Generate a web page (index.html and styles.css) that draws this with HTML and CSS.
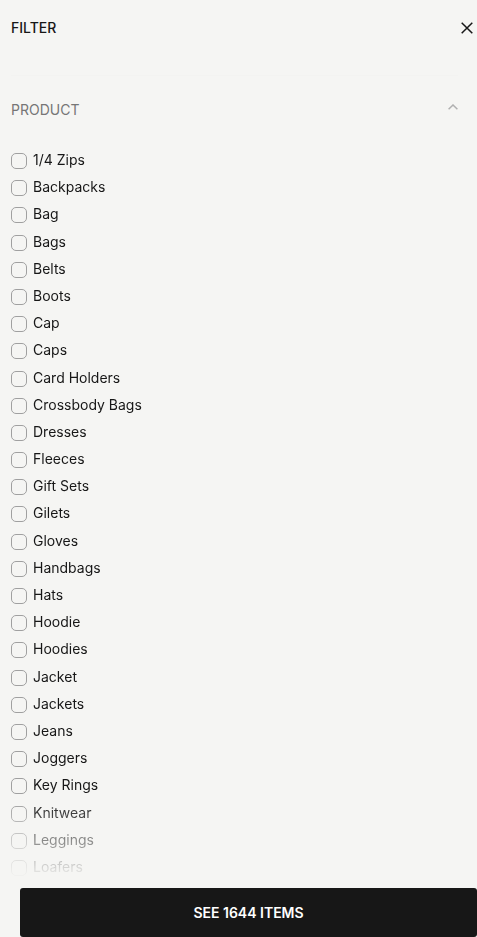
FILE: index.html
```html
<!DOCTYPE html>
<html lang="en">
<head>
    <meta charset="UTF-8">
    <meta name="viewport" content="width=device-width, initial-scale=1">
    <title>Filter</title>
    <link rel="stylesheet" href="styles.css">
</head>
<body>
<form id="filter">
    <header class="filter-head">
        <h2>FILTER</h2>
        <button type="button" class="close" aria-label="Close">
            <svg width="12" height="12" viewBox="0 0 12 12"><path d="M0.7 0.7L11.3 11.3M11.3 0.7L0.7 11.3"/></svg>
        </button>
    </header>
    <section class="group">
        <button type="button" class="group-title" aria-expanded="true">
            <span>PRODUCT</span>
            <svg width="10" height="6" viewBox="0 0 10 6"><path d="M0.6 5.2L5 1L9.4 5.2"/></svg>
        </button>
        <ul class="options">
            <li><label><input type="checkbox" name="product"><span>1/4 Zips</span></label></li>
            <li><label><input type="checkbox" name="product"><span>Backpacks</span></label></li>
            <li><label><input type="checkbox" name="product"><span>Bag</span></label></li>
            <li><label><input type="checkbox" name="product"><span>Bags</span></label></li>
            <li><label><input type="checkbox" name="product"><span>Belts</span></label></li>
            <li><label><input type="checkbox" name="product"><span>Boots</span></label></li>
            <li><label><input type="checkbox" name="product"><span>Cap</span></label></li>
            <li><label><input type="checkbox" name="product"><span>Caps</span></label></li>
            <li><label><input type="checkbox" name="product"><span>Card Holders</span></label></li>
            <li><label><input type="checkbox" name="product"><span>Crossbody Bags</span></label></li>
            <li><label><input type="checkbox" name="product"><span>Dresses</span></label></li>
            <li><label><input type="checkbox" name="product"><span>Fleeces</span></label></li>
            <li><label><input type="checkbox" name="product"><span>Gift Sets</span></label></li>
            <li><label><input type="checkbox" name="product"><span>Gilets</span></label></li>
            <li><label><input type="checkbox" name="product"><span>Gloves</span></label></li>
            <li><label><input type="checkbox" name="product"><span>Handbags</span></label></li>
            <li><label><input type="checkbox" name="product"><span>Hats</span></label></li>
            <li><label><input type="checkbox" name="product"><span>Hoodie</span></label></li>
            <li><label><input type="checkbox" name="product"><span>Hoodies</span></label></li>
            <li><label><input type="checkbox" name="product"><span>Jacket</span></label></li>
            <li><label><input type="checkbox" name="product"><span>Jackets</span></label></li>
            <li><label><input type="checkbox" name="product"><span>Jeans</span></label></li>
            <li><label><input type="checkbox" name="product"><span>Joggers</span></label></li>
            <li><label><input type="checkbox" name="product"><span>Key Rings</span></label></li>
            <li><label><input type="checkbox" name="product"><span>Knitwear</span></label></li>
            <li><label><input type="checkbox" name="product"><span>Leggings</span></label></li>
            <li><label><input type="checkbox" name="product"><span>Loafers</span></label></li>
        </ul>
    </section>
    <footer class="filter-foot">
        <button type="submit" class="submit">SEE 1644 ITEMS</button>
    </footer>
</form>
</body>
</html>
```
FILE: styles.css
```css
*{
    margin: 0;
    padding: 0;
    box-sizing: border-box;
}
body{
    background: #f5f5f3;
    color: #171717;
    font-family: Inter, "Liberation Sans", sans-serif;
    font-size: 14px;
    line-height: 20px;
}
ul{
    list-style: none;
}
button{
    border: 0;
    background: none;
    color: inherit;
    font: inherit;
    cursor: pointer;
}
svg{
    display: block;
    fill: none;
    stroke: currentColor;
}
#filter{
    display: flex;
    flex-direction: column;
    min-height: 100vh;
}
.filter-head{
    display: flex;
    justify-content: space-between;
    align-items: center;
    height: 56px;
    padding: 0 4px 0 11px;
}
.filter-head h2{
    font-size: 14px;
    font-weight: 500;
}
.close svg{
    stroke-width: 1.5;
}
.group{
    display: flex;
    flex: 1;
    flex-direction: column;
    margin: 19px 19px 0 11px;
    border-top: 1px solid #f3f3f1;
}
.group-title{
    display: flex;
    justify-content: space-between;
    padding: 24px 0 28px;
    color: #767676;
}
.group-title svg{
    margin-top: 4px;
    color: #b0b0b0;
    stroke-width: 1.5;
}
/* rows share the free height, the last ones fade out above the button */
.options{
    display: flex;
    flex: 1;
    flex-direction: column;
    justify-content: space-between;
    -webkit-mask-image: linear-gradient(to top, transparent, #000 80px);
    mask-image: linear-gradient(to top, transparent, #000 80px);
}
.options label{
    display: flex;
    gap: 6px;
    line-height: 24px;
    cursor: pointer;
}
.options input{
    appearance: none;
    width: 16px;
    height: 16px;
    margin-top: 5px;
    border: 1px solid #a0a0a0;
    border-radius: 5px;
}
.options input:checked{
    background: #171717;
}
.filter-foot{
    padding: 9px 0 0 20px;
}
.submit{
    display: block;
    width: 100%;
    height: 49px;
    border-radius: 3px;
    background: #171717;
    color: #fff;
    font-weight: 600;
}
```
